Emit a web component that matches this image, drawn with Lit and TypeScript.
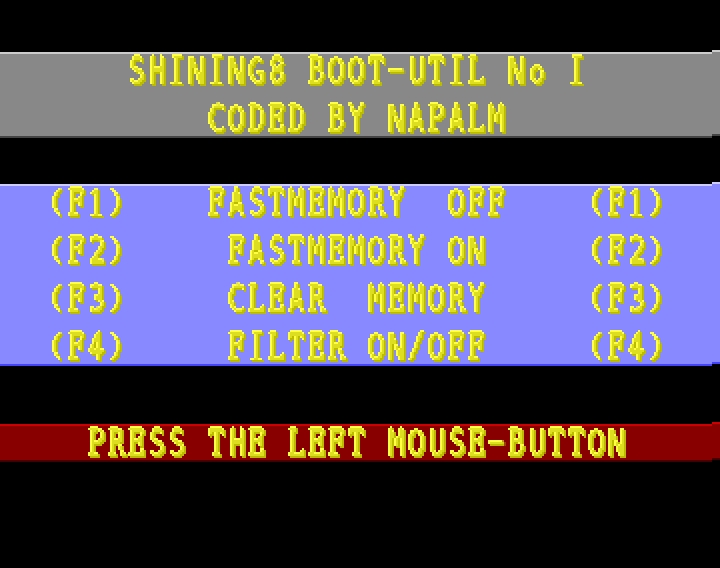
import { LitElement, html, css, svg } from "lit";
import { customElement, property } from "lit/decorators.js";
import { styleMap } from "lit/directives/style-map.js";

const FONT_SIZE = 38;
const SERIF = '"DejaVu Serif Condensed", "DejaVu Serif", serif';
const SANS = '"DejaVu Sans Mono", monospace';
const ROUND = '"Liberation Sans", sans-serif';
const SANS_CHARS = "HNMUASOCGY8234-/o";
const ROUND_CHARS = "()";
const ROW = 32;
const BASELINE = 30.3;
const STEM = 3.7;

/* Ink box of a character inside its 20px cell: left, right, bottom and top above the baseline.
   Curved characters overshoot by a fraction of a pixel so their outer rows survive the mosaic. */
type Box = [number, number, number, number];
const DEFAULT_BOX: Box = [0, 16, 0, 28.1];
const BOXES: Record<string, Box> = {
  S: [2, 16, -0.7, 29],
  O: [0, 16, -0.5, 28.5],
  C: [0, 16, -0.5, 28.5],
  G: [0, 16, -0.5, 28.5],
  H: [2, 16, 0, 28.1],
  I: [2, 14, 0, 28.1],
  U: [2, 16, -0.5, 28.1],
  R: [0, 18, 0, 28.1],
  "1": [2, 14, 0, 28.1],
  "2": [2, 16, 0, 29],
  "3": [2, 16, -0.7, 29],
  "4": [0, 16, 0, 28.1],
  "8": [2, 16, -0.7, 29],
  "(": [4, 14, 0, 28.1],
  ")": [2, 12, 0, 28.1],
  o: [2, 16, -0.5, 20.7],
  "-": [0, 16, 12.2, 16.2],
};

const pen = document.createElement("canvas").getContext("2d")!;

function familyOf(ch: string): string {
  if (ROUND_CHARS.includes(ch)) return ROUND;
  return SANS_CHARS.includes(ch) ? SANS : SERIF;
}

function fit(ch: string): Record<string, string> {
  const family = familyOf(ch);
  pen.font = `${FONT_SIZE}px ${family}`;
  const m = pen.measureText(ch);
  const [l, r, b, t] = BOXES[ch] ?? DEFAULT_BOX;
  const inkL = -m.actualBoundingBoxLeft;
  const inkW = m.actualBoundingBoxRight + m.actualBoundingBoxLeft;
  const inkB = m.actualBoundingBoxDescent;
  const inkH = m.actualBoundingBoxAscent + inkB;
  const rough = (r - l) / inkW;
  const stroke = ch === "-" ? 0 : ch === "M" ? 0.1 : Math.max(0.5, Math.min(2.2, 4.2 / rough - STEM));
  const sx = (r - l) / (inkW + stroke);
  const sy = (t - b) / (inkH + stroke);
  const base = ROW / 2 + (m.fontBoundingBoxAscent - m.fontBoundingBoxDescent) / 2;
  const tx = l - sx * (inkL - stroke / 2);
  const ty = BASELINE - base - b - sy * (inkB + stroke / 2);
  return {
    fontFamily: family,
    transformOrigin: `0 ${base}px`,
    transform: `translate(${tx}px, ${ty}px) scale(${sx}, ${sy})`,
    "-webkit-text-stroke-width": `${stroke}px`,
  };
}

@customElement("raster-band")
class RasterBand extends LitElement {
  @property({ type: Array }) lines: string[] = [];

  static styles = css`
    :host { display: grid; grid-template-columns: 712px 8px; }
    .body, .edge {
      box-sizing: border-box;
      background: var(--fill);
      border-top: 2px solid var(--light);
      border-bottom: 2px solid var(--dark);
    }
    .edge { transform: translateY(-2px); }
    .pixels {
      filter: url(#bevel);
      display: flex;
      flex-direction: column;
      gap: 16px;
      width: 712px;
    }
    .line {
      height: 32px;
      line-height: 32px;
      padding-left: 8px;
      white-space: pre;
      display: flex;
      font-size: 38px;
      color: #dddd22;
      -webkit-text-stroke: 0px #dddd22;
    }
    .cell { display: block; width: 20px; height: 32px; flex: none; }
    .glyph { display: block; width: max-content; height: 32px; }
    .defs { position: absolute; width: 0; height: 0; }
  `;

  render() {
    return html`
      <svg class="defs" aria-hidden="true">${svg`
        <filter id="bevel" filterUnits="userSpaceOnUse" x="0" y="0" width="712" height="200" color-interpolation-filters="sRGB">
          <feGaussianBlur in="SourceAlpha" stdDeviation="0.4" result="blurred"/>
          <feOffset in="blurred" dx="-1" dy="0" result="b1"/>
          <feComposite in="blurred" in2="b1" operator="arithmetic" k2="0.5" k3="0.5" result="bx"/>
          <feOffset in="bx" dx="0" dy="-1" result="b2"/>
          <feComposite in="bx" in2="b2" operator="arithmetic" k2="0.5" k3="0.5" result="soft"/>
          <feFlood x="0" y="0" width="1" height="1" flood-color="#000" result="dot"/>
          <feComposite in="dot" in2="dot" operator="over" x="0" y="0" width="2" height="2"/>
          <feTile result="grid"/>
          <feComposite in="soft" in2="grid" operator="in"/>
          <feComponentTransfer result="p"><feFuncA type="linear" slope="40" intercept="-18"/></feComponentTransfer>
          <feOffset in="p" dx="1" dy="0" result="px"/>
          <feOffset in="p" dx="0" dy="1" result="py"/>
          <feOffset in="p" dx="1" dy="1" result="pxy"/>
          <feMerge result="m"><feMergeNode in="p"/><feMergeNode in="px"/><feMergeNode in="py"/><feMergeNode in="pxy"/></feMerge>
          <feOffset in="m" dx="2" dy="0" result="right"/>
          <feOffset in="m" dx="0" dy="2" result="down"/>
          <feOffset in="m" dx="2" dy="2" result="diag"/>
          <feFlood flood-color="#bbbb00"/><feComposite in2="diag" operator="in" result="dark"/>
          <feFlood flood-color="#dddd22"/><feComposite in2="m" operator="in" result="mid"/>
          <feFlood flood-color="#ffff44" result="lt"/>
          <feComposite in="m" in2="right" operator="out" result="edgeX"/>
          <feComposite in="m" in2="down" operator="out" result="edgeY"/>
          <feComposite in="lt" in2="edgeX" operator="in" result="lightX"/>
          <feComposite in="lt" in2="edgeY" operator="in" result="lightY"/>
          <feMerge><feMergeNode in="dark"/><feMergeNode in="mid"/><feMergeNode in="lightX"/><feMergeNode in="lightY"/></feMerge>
        </filter>`}
      </svg>
      <div class="body">
        <div class="pixels">
          ${this.lines.map((l) => html`<div class="line">${[...l].map((ch) =>
            ch === " "
              ? html`<span class="cell"> </span>`
              : html`<span class="cell"><span class="glyph" style=${styleMap(fit(ch))}>${ch}</span></span>`)}</div>`)}
        </div>
      </div>
      <div class="edge"></div>
    `;
  }
}

@customElement("app-root")
class AppRoot extends LitElement {
  static styles = css`
    :host {
      display: flex;
      flex-direction: column;
      box-sizing: border-box;
      width: 720px;
      height: 568px;
      padding-top: 52px;
      background: #000;
      overflow: hidden;
    }
    .title { height: 86px; --fill: #888888; --light: #cccccc; --dark: #444444; }
    .menu { height: 182px; margin-top: 46px; --fill: #8888ff; --light: #ccccff; --dark: #4444ff; }
    .prompt { height: 38px; margin-top: 58px; --fill: #880000; --light: #cc0000; --dark: #440000; }
  `;

  render() {
    return html`
      <raster-band class="title" .lines=${[
        "      SHINING8 BOOT-UTIL No I",
        "          CODED BY NAPALM",
      ]}></raster-band>
      <raster-band class="menu" .lines=${[
        "  (F1)    FASTMEMORY  OFF    (F1)",
        "  (F2)     FASTMEMORY ON     (F2)",
        "  (F3)     CLEAR  MEMORY     (F3)",
        "  (F4)     FILTER ON/OFF     (F4)",
      ]}></raster-band>
      <raster-band class="prompt" .lines=${["    PRESS THE LEFT MOUSE-BUTTON"]}></raster-band>
    `;
  }
}
